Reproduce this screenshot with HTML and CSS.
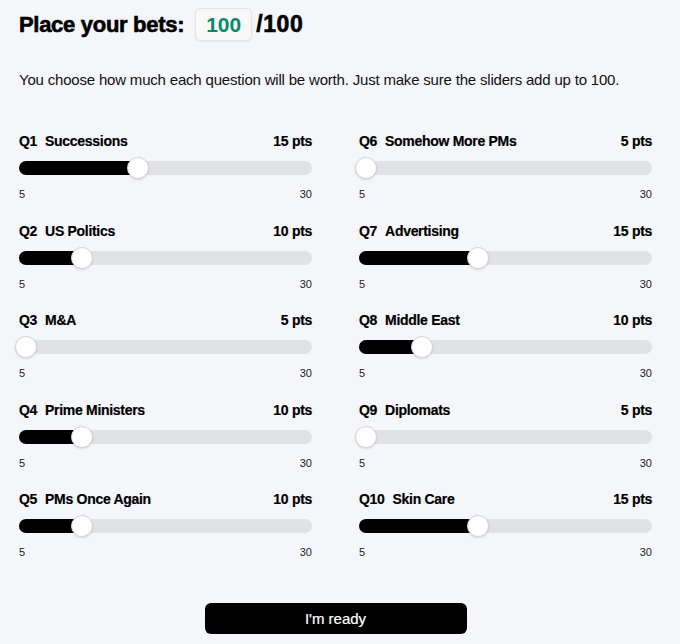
FILE: index.html
```html
<!DOCTYPE html>
<html lang="en">
<head>
<meta charset="utf-8">
<title>Place your bets</title>
<link rel="stylesheet" href="styles.css">
</head>
<body>
<main class="page">
  <header class="head">
    <h1 class="title">Place your bets:</h1>
    <span class="total">100</span>
    <span class="max">/100</span>
  </header>
  <p class="intro">You choose how much each question will be worth. Just make sure the sliders add up to 100.</p>
  <div class="grid">
    <div class="col">
      <div class="item">
        <div class="label"><span class="q">Q1</span><span class="name">Successions</span><span class="pts">15 pts</span></div>
        <div class="track"><div class="fill" style="width:calc(7px + (100% - 14px) * 0.4)"></div><div class="thumb" style="left:calc(-4px + (100% - 14px) * 0.4)"></div></div>
        <div class="range"><span>5</span><span>30</span></div>
      </div>
      <div class="item">
        <div class="label"><span class="q">Q2</span><span class="name">US Politics</span><span class="pts">10 pts</span></div>
        <div class="track"><div class="fill" style="width:calc(7px + (100% - 14px) * 0.2)"></div><div class="thumb" style="left:calc(-4px + (100% - 14px) * 0.2)"></div></div>
        <div class="range"><span>5</span><span>30</span></div>
      </div>
      <div class="item">
        <div class="label"><span class="q">Q3</span><span class="name">M&amp;A</span><span class="pts">5 pts</span></div>
        <div class="track"><div class="fill" style="width:0"></div><div class="thumb" style="left:-4px"></div></div>
        <div class="range"><span>5</span><span>30</span></div>
      </div>
      <div class="item">
        <div class="label"><span class="q">Q4</span><span class="name">Prime Ministers</span><span class="pts">10 pts</span></div>
        <div class="track"><div class="fill" style="width:calc(7px + (100% - 14px) * 0.2)"></div><div class="thumb" style="left:calc(-4px + (100% - 14px) * 0.2)"></div></div>
        <div class="range"><span>5</span><span>30</span></div>
      </div>
      <div class="item">
        <div class="label"><span class="q">Q5</span><span class="name">PMs Once Again</span><span class="pts">10 pts</span></div>
        <div class="track"><div class="fill" style="width:calc(7px + (100% - 14px) * 0.2)"></div><div class="thumb" style="left:calc(-4px + (100% - 14px) * 0.2)"></div></div>
        <div class="range"><span>5</span><span>30</span></div>
      </div>
    </div>
    <div class="col">
      <div class="item">
        <div class="label"><span class="q">Q6</span><span class="name">Somehow More PMs</span><span class="pts">5 pts</span></div>
        <div class="track"><div class="fill" style="width:0"></div><div class="thumb" style="left:-4px"></div></div>
        <div class="range"><span>5</span><span>30</span></div>
      </div>
      <div class="item">
        <div class="label"><span class="q">Q7</span><span class="name">Advertising</span><span class="pts">15 pts</span></div>
        <div class="track"><div class="fill" style="width:calc(7px + (100% - 14px) * 0.4)"></div><div class="thumb" style="left:calc(-4px + (100% - 14px) * 0.4)"></div></div>
        <div class="range"><span>5</span><span>30</span></div>
      </div>
      <div class="item">
        <div class="label"><span class="q">Q8</span><span class="name">Middle East</span><span class="pts">10 pts</span></div>
        <div class="track"><div class="fill" style="width:calc(7px + (100% - 14px) * 0.2)"></div><div class="thumb" style="left:calc(-4px + (100% - 14px) * 0.2)"></div></div>
        <div class="range"><span>5</span><span>30</span></div>
      </div>
      <div class="item">
        <div class="label"><span class="q">Q9</span><span class="name">Diplomats</span><span class="pts">5 pts</span></div>
        <div class="track"><div class="fill" style="width:0"></div><div class="thumb" style="left:-4px"></div></div>
        <div class="range"><span>5</span><span>30</span></div>
      </div>
      <div class="item">
        <div class="label"><span class="q">Q10</span><span class="name">Skin Care</span><span class="pts">15 pts</span></div>
        <div class="track"><div class="fill" style="width:calc(7px + (100% - 14px) * 0.4)"></div><div class="thumb" style="left:calc(-4px + (100% - 14px) * 0.4)"></div></div>
        <div class="range"><span>5</span><span>30</span></div>
      </div>
    </div>
  </div>
  <div class="actions"><button class="ready" type="button">I'm ready</button></div>
</main>
</body>
</html>
```
FILE: styles.css
```css
html, body {
  margin: 0;
  padding: 0;
  background: #f5f6fa;
}
body {
  font-family: "Liberation Sans", Arial, sans-serif;
  color: #000;
}
.page {
  width: 633px;
  padding: 8px 0 0 19px;
}
.head {
  display: flex;
  align-items: center;
  height: 33px;
}
.title {
  margin: 0;
  font-size: 22px;
  font-weight: 700;
  letter-spacing: -0.3px;
  -webkit-text-stroke: 0.6px #000;
}
.total {
  margin-left: 11px;
  width: 57px;
  height: 33px;
  box-sizing: border-box;
  border: 1px solid #e2e3e6;
  border-radius: 5px;
  background: #f8f8f9;
  color: #0b8a6b;
  font-size: 21px;
  font-weight: 700;
  display: flex;
  align-items: center;
  justify-content: center;
  box-shadow: 0 1px 2px rgba(0,0,0,0.06);
}
.max {
  margin-left: 4px;
  font-size: 23px;
  font-weight: 700;
  letter-spacing: 0.6px;
  -webkit-text-stroke: 0.6px #000;
}
.intro {
  margin: 29px 0 0;
  font-size: 15px;
  line-height: 20px;
  letter-spacing: -0.19px;
  color: #111;
}
.grid {
  margin-top: 41px;
  display: grid;
  grid-template-columns: 293px 293px;
  column-gap: 47px;
}
.col {
  display: flex;
  flex-direction: column;
  gap: 19.5px;
}
.item {
  display: flex;
  flex-direction: column;
}
.label {
  display: flex;
  align-items: center;
  height: 20px;
  font-size: 14px;
  font-weight: 700;
  letter-spacing: -0.3px;
  -webkit-text-stroke: 0.2px #000;
}
.q {
  margin-right: 8px;
}
.pts {
  margin-left: auto;
}
.track {
  position: relative;
  margin-top: 6px;
  height: 22px;
}
.track::before {
  content: "";
  position: absolute;
  left: 0;
  right: 0;
  top: 4px;
  height: 14px;
  border-radius: 7px;
  background: #e1e2e6;
}
.fill {
  position: absolute;
  left: 0;
  top: 4px;
  height: 14px;
  border-radius: 7px 0 0 7px;
  background: #000;
}
.thumb {
  position: absolute;
  top: 0;
  width: 22px;
  height: 22px;
  box-sizing: border-box;
  border-radius: 50%;
  background: #fff;
  border: 1px solid #d4d5d9;
  box-shadow: 0 1px 2px rgba(0,0,0,0.12);
}
.range {
  margin-top: 8px;
  display: flex;
  justify-content: space-between;
  font-size: 11px;
  line-height: 14px;
  color: #222;
}
.actions {
  margin-top: 44px;
  display: flex;
  justify-content: center;
}
.ready {
  width: 262px;
  height: 31px;
  border: 0;
  border-radius: 6px;
  background: #000;
  color: #fff;
  font-family: "Liberation Sans", Arial, sans-serif;
  font-size: 15px;
  font-weight: 500;
  -webkit-text-stroke: 0.2px #fff;
  cursor: pointer;
}
```
